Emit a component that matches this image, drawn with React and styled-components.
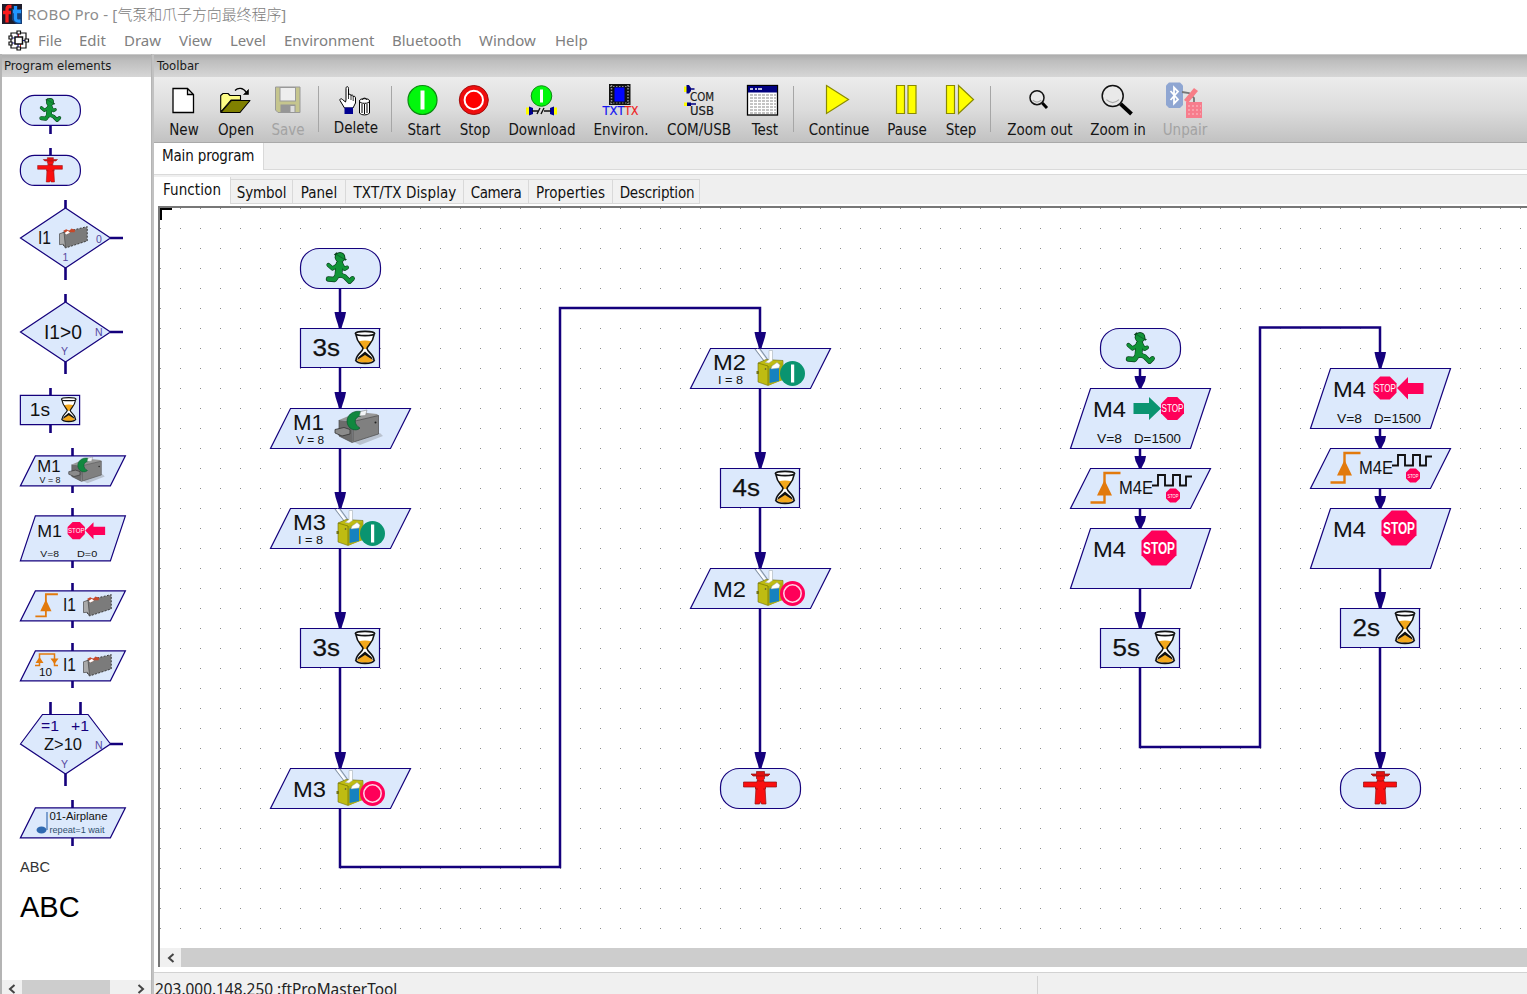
import React from "react";
import styled, { createGlobalStyle } from "styled-components";

const NAVY = "#14007c";
const FILL = "#dce9fc";
const PINK = "#ff0059";
const TEAL = "#0a9470";

const GlobalStyle = createGlobalStyle`
  *, *::before, *::after { box-sizing: border-box; }
  html, body { margin: 0; padding: 0; background: #fff; overflow: hidden; }
`;

/* ---------- window chrome ---------- */

const Window = styled.div`
  width: 1527px;
  height: 994px;
  overflow: hidden;
  display: flex;
  flex-direction: column;
  background: #fff;
  color: #111;
  font-family: "DejaVu Sans Condensed", "DejaVu Sans", sans-serif;
`;

const TitleBar = styled.header`
  height: 28px;
  flex: none;
  display: flex;
  align-items: center;
  gap: 5px;
  padding-left: 2px;
  font: 15px/28px "Noto Sans", "Noto Sans CJK SC", sans-serif;
  color: #8c8c8c;
  white-space: pre;
`;

const TitleText = styled.span`
  letter-spacing: 0.2px;
`;

const CjkText = styled.span`
  font-weight: 300;
  letter-spacing: -0.1px;
  color: #7c7c7c;
`;

const MenuBar = styled.nav`
  height: 26px;
  flex: none;
  display: flex;
  align-items: flex-start;
  padding-left: 8px;
  font: 15px/24px "Noto Sans", sans-serif;
  color: #808080;
`;

const MenuItem = styled.span`
  width: ${(p) => p.$w}px;
  white-space: nowrap;
`;

const MenuIcon = styled.span`
  width: 30px;
  height: 23px;
  padding-top: 2px;
  svg { display: block; }
`;

const Body = styled.div`
  flex: 1;
  min-height: 0;
  display: flex;
`;

const PanelTitle = styled.div`
  height: 23px;
  flex: none;
  padding-left: ${(p) => p.$pad}px;
  font-size: 13px;
  line-height: 21px;
  color: #1a1a1a;
  border-top: 1px solid #c8c8c8;
  background: linear-gradient(#adadad, #bdbdbd 25%, #d6d6d6);
`;

const Sidebar = styled.aside`
  width: 152px;
  flex: none;
  display: flex;
  flex-direction: column;
  border-left: 2px solid #b4b4b4;
  border-right: 1px solid #b4b4b4;
`;

const Palette = styled.div`
  flex: 1;
  min-height: 0;
  overflow: hidden;
  display: flex;
  flex-direction: column;
  align-items: flex-start;
  gap: 15px;
  padding: 18px 0 0 18px;
`;

const PaletteItem = styled.svg`
  width: 110px;
  height: ${(p) => p.$h}px;
  flex: none;
  display: block;
  overflow: visible;
`;

const PaletteText = styled.div`
  font-family: "Liberation Sans", sans-serif;
  font-size: ${(p) => p.$size}px;
  line-height: ${(p) => p.$lh}px;
  color: ${(p) => p.$color};
`;

const ScrollBar = styled.div`
  height: ${(p) => p.$h}px;
  flex: none;
  display: flex;
  background: #f0f0f0;
`;

const ScrollArrow = styled.div`
  width: ${(p) => p.$w}px;
  padding-top: ${(p) => p.$drop || 0}px;
  display: flex;
  align-items: center;
  justify-content: center;
`;

const ScrollThumb = styled.div`
  width: ${(p) => p.$w || "auto"};
  flex: ${(p) => (p.$w ? "none" : 1)};
  background: #cdcdcd;
`;

const Grow = styled.div`
  flex: 1;
`;

const Main = styled.main`
  flex: 1;
  min-width: 0;
  display: flex;
  flex-direction: column;
  border-left: 2px solid #c2c2c2;
`;

/* ---------- toolbar ---------- */

const Toolbar = styled.div`
  height: 66px;
  flex: none;
  display: flex;
  padding: 7px 0 0 4px;
  background: linear-gradient(#ececec, #dcdcdc 50%, #c2c2c2);
  border-bottom: 1px solid #a9a9a9;
`;

const ToolButton = styled.div`
  width: ${(p) => p.$w}px;
  flex: none;
  display: flex;
  flex-direction: column;
  align-items: center;
  color: ${(p) => (p.$disabled ? "#a3a3a3" : "#151515")};
`;

const ToolIcon = styled.svg`
  width: 32px;
  height: 32px;
  overflow: visible;
  display: block;
`;

const ToolLabel = styled.span`
  margin-top: ${(p) => (p.$raised ? 3 : 5)}px;
  font-size: 15px;
  line-height: 18px;
  white-space: nowrap;
`;

const Separator = styled.div`
  width: 1px;
  height: 46px;
  margin: 2px ${(p) => p.$after}px 0 ${(p) => p.$before}px;
  background: #a6a6a6;
  flex: none;
`;

/* ---------- tabs ---------- */

const ProgramTabs = styled.div`
  height: 27px;
  flex: none;
  display: flex;
  background: #efefef;
  border-bottom: 1px solid #dadada;
`;

const ProgramTab = styled.div`
  width: 110px;
  height: 27px;
  padding-left: 8px;
  font-size: 15px;
  line-height: 27px;
  letter-spacing: -0.15px;
  background: #fff;
  border-right: 1px solid #d9d9d9;
`;

const ViewTabs = styled.div`
  height: 30px;
  flex: none;
  display: flex;
  align-items: flex-end;
  margin-top: 4px;
  background: #efefef;
  border-top: 1px solid #dadada;
`;

const ViewTab = styled.div`
  width: ${(p) => p.$w}px;
  height: ${(p) => (p.$active ? 27 : 25)}px;
  display: flex;
  justify-content: center;
  font-size: 15px;
  line-height: ${(p) => (p.$active ? 27 : 26)}px;
  letter-spacing: ${(p) => p.$ls || 0}px;
  padding-left: ${(p) => p.$pad || 0}px;
  white-space: nowrap;
  background: ${(p) => (p.$active ? "#fff" : "#f1f1f1")};
  border: solid #d9d9d9;
  border-width: ${(p) => (p.$active ? "0 1px 0 0" : "1px 1px 1px 0")};
`;

/* ---------- canvas ---------- */

const CanvasFrame = styled.div`
  height: 761px;
  flex: none;
  display: flex;
  flex-direction: column;
  margin: 2px 0 0 4px;
  border-top: 2px solid #777;
  border-left: 2px solid #777;
`;

const Canvas = styled.div`
  position: relative;
  flex: 1;
  overflow: hidden;
  background-color: #fff;
  background-image: radial-gradient(circle at 0.5px 0.5px, #8c8c8c 0.8px, transparent 0.9px);
  background-size: 20px 20px;
`;

const Corner = styled.div`
  position: absolute;
  left: 0;
  top: 0;
  width: 12px;
  height: 12px;
  border-top: 2px solid #000;
  border-left: 2px solid #000;
`;

const Wires = styled.svg`
  position: absolute;
  left: 0;
  top: 0;
  width: 1370px;
  height: 740px;
`;

const CanvasNode = styled.svg`
  position: absolute;
  left: ${(p) => p.$x}px;
  top: ${(p) => p.$y}px;
  width: 142px;
  height: 62px;
  overflow: visible;
`;

const StatusBar = styled.footer`
  flex: 1;
  display: flex;
  margin-top: 5px;
  border-top: 1px solid #d2d2d2;
  background: #f0f0f0;
  font: 15.4px/27px "Noto Sans", sans-serif;
  color: #222;
`;

const StatusCell = styled.div`
  width: ${(p) => p.$w}px;
  margin-top: 3px;
  padding-left: 1px;
  border-right: 1px solid #d2d2d2;
`;

/* ---------- drawing primitives for program elements ---------- */

const line = { stroke: NAVY, strokeWidth: 1.2, vectorEffect: "non-scaling-stroke", fill: FILL };

const T = ({ x, y, s, w, c = "#111", children, ...rest }) => (
  <text
    x={x}
    y={y}
    fontSize={s}
    fill={c}
    fontFamily='"Liberation Sans", sans-serif'
    {...(w ? { textLength: w, lengthAdjust: "spacingAndGlyphs" } : {})}
    {...rest}
  >
    {children}
  </text>
);

const Stub = ({ d }) => <path d={d} stroke={NAVY} strokeWidth="2.600" fill="none" vectorEffect="non-scaling-stroke" />;

const Oval = () => <rect x=".5" y=".5" width="80" height="40" rx="19" ry="18.500" {...line} />;
const Box = () => <rect x=".5" y=".5" width="79" height="39" {...line} />;
const Slant = ({ h = 40 }) => <path d={`M20.500 .5H140.500L120.500 ${h + 0.5}H.5Z`} {...line} />;

const LIMBS = [
  ["M39.500 16.500 38.500 26", 6.6],
  ["M38 17 32.500 20.500 28.500 17", 3],
  ["M41.500 16.500 44.500 21 47 19.500", 2.8],
  ["M38 26.500 34.500 31.500 28.500 31", 4.2],
  ["M39 26.500 44.500 28.500 49.500 33.500 52.500 30.500", 3.6],
];

const Walker = () => (
  <g fill="none" strokeLinejoin="round" strokeLinecap="round">
    {LIMBS.map(([d, w]) => <path key={d} d={d} stroke="#0b3f1d" strokeWidth={w + 1.2} />)}
    <circle cx="40" cy="9.300" r="5.300" fill="#0b3f1d" />
    <path d="M33.800 6.800 36.500 4.300 47 11.500 45 12.500Z" fill="#0b3f1d" />
    {LIMBS.map(([d, w]) => <path key={d} d={d} stroke="#119438" strokeWidth={w} />)}
    <circle cx="40" cy="9.500" r="4.500" fill="#119438" />
    <path d="M36.500 6.500 45.500 12" stroke="#0b5a28" strokeWidth=".8" />
  </g>
);

const Stander = () => (
  <g fill="#fa0f0f" stroke="#8f1010" strokeWidth=".7">
    <path d="M36 18.500H45L45.500 28 46 36H41.500L40.500 33.500 39.500 36H35L35.500 28Z" />
    <path d="M23.500 14H37V12.500H44V14H56.500V19H45.500V21H35.500V19H23.500Z" />
    <path d="M38 18.500H43V22H38Z" stroke="none" />
    <path d="M36.500 7H44.500V10.500L42.500 13H38.500L36.500 10.500Z" />
    <path d="M36.500 3.500H44.500V6H50L48 8H33L31 6H36.500Z" fill="#e01212" />
  </g>
);

const Hourglass = () => (
  <g transform="translate(-.5 0)">
    <path d="M57.500 8C58 15 63 18 63.500 20 63 24 57 28 57 33 60 36 71 36 74 33 74 28 68 24 67.500 20 68 18 73 15 73.500 8Z" fill="#fff" />
    <path d="M59 13.500Q65.500 11.500 72 13.500 70 18 67 21H64Q61 18 59 13.500Z" fill="#f4a81c" />
    <path d="M57.500 33Q59 30 65.500 25 72 30 73.500 33 66 37 57.500 33Z" fill="#f4a81c" />
    <path d="M65.500 23.500 59 29 57.500 32 65.500 27 73.500 32 72 29Z" fill="#111" />
    <ellipse cx="65.500" cy="5.500" rx="9.700" ry="2.100" fill="#fff" stroke="#111" strokeWidth="1.600" />
    <path d="M56.500 7C57.500 15 63 17.500 63.500 20.500 63 24 57 26 56.500 32M74.500 7C73.500 15 68 17.500 67.500 20.500 68 24 74 26 74.500 32" fill="none" stroke="#111" strokeWidth="1.600" />
    <path d="M56 32C58 36.500 73 36.500 75 32" fill="none" stroke="#111" strokeWidth="1.800" />
  </g>
);

const Motor = () => (
  <g>
    <path d="M82 33 110 25 113 28 90 37Z" fill="#b9c2cf" />
    <path d="M83 13 108.500 7V26L82 34.500Z" fill="#808080" />
    <path d="M69 12 88 4 107 6 108.500 7.500 83 13.500Z" fill="#989898" />
    <path d="M69 12 83 13.500 82 34.500 69 28Z" fill="#6c6c6c" />
    <path d="M69 12V28L82 34.500 108.500 26V7.500L83 13.500V33" stroke="#4a4a4a" fill="none" strokeWidth=".7" />
    <path d="M65 21.500 74 19.500 80 21.500V26L72 28 65 25Z" fill="#8b8b8b" stroke="#333" strokeWidth=".8" />
    <circle cx="105.500" cy="14.500" r="1" fill="#222" />
    <path d="M91 3.500C79 1.500 73 13 80 20 83 22.500 88 22.500 90 20 84 17 83 9 91 8Z" fill="#11883f" stroke="#0a4f2c" strokeWidth=".6" />
    <path d="M90.500 3.500 97 2 95.500 7.500 89.500 8Z" fill="#f3f5f7" stroke="#777" strokeWidth=".5" />
  </g>
);

const Valve = () => (
  <g>
    <path d="M65 1 75 14M70 1 78 12" stroke="#8795a5" strokeWidth="1.200" />
    <path d="M67 1 76 13" stroke="#fff" strokeWidth="2" />
    <path d="M68 15 76 11.500 93 12.500V31L78 37.500 68 34Z" fill="#bfbc12" stroke="#6b6b10" strokeWidth=".6" />
    <path d="M78 18 93 14V32L78 37.500Z" fill="#aead10" />
    <path d="M68 15 78 18V37" stroke="#747405" strokeWidth=".7" fill="none" />
    <path d="M79.500 20.500 89 19V33L79.500 35Z" fill="#1682c0" />
    <path d="M79 15 82.500 12.500V2.500H79V11.500L75 14.500ZM82 18 87 14.500 90 17 89 20 81 21Z" fill="#fff" stroke="#9aa5a8" strokeWidth=".5" />
    <rect x="66.500" y="23" width="2.500" height="3" fill="#747415" />
    <circle cx="75.500" cy="21" r=".8" fill="#444" />
  </g>
);

const OnBadge = () => (
  <g>
    <circle cx="102.500" cy="25.500" r="12.500" fill={TEAL} />
    <rect x="101" y="16.500" width="3.200" height="18" fill="#fff" />
  </g>
);

const OffBadge = () => (
  <g>
    <circle cx="102.500" cy="25.500" r="12.500" fill={PINK} />
    <circle cx="102.500" cy="25.500" r="8.700" fill={PINK} stroke="#ffd6e4" strokeWidth="1.500" />
  </g>
);

const Octagon = ({ x, y, r, s, w }) => {
  const k = r * 0.42;
  return (
    <g>
      <path
        d={`M${x - k} ${y - r}H${x + k}L${x + r} ${y - k}V${y + k}L${x + k} ${y + r}H${x - k}L${x - r} ${y + k}V${y - k}Z`}
        fill={PINK}
      />
      <T x={x - w / 2} y={y + s * 0.36} s={s} w={w} c="#fff" fontWeight={r > 14 ? 700 : 400}>
        STOP
      </T>
    </g>
  );
};

const Edge = () => (
  <g>
    <path d="M20.500 34.500H34.500V5H50.500" fill="none" stroke="#e27a0c" strokeWidth="2.400" />
    <path d="M34.500 12 42 27.500H27Z" fill="#e27a0c" />
  </g>
);

const Switch = () => (
  <g>
    <path d="M67 15 99 7.500V26.500L70 36 67 32Z" fill="#7b7b7b" stroke="#3a3a3a" strokeWidth="1.300" strokeDasharray="2.500 2" />
    <path d="M62 17 68 15 70 35.500 67 31 62 31.500Z" fill="#a9a9a9" stroke="#444" strokeWidth=".9" />
    <path d="M67 13 71 11 75 13 78 10 83 12 82 15 76 15 72 18Z" fill="#c7482a" />
    <path d="M69 16 73 13 76 15.500 71 18Z" fill="#fff" />
  </g>
);

const Pulses = () => (
  <g>
    <path d="M82 17.500H88V7H95V17.500H103V7H110V17.500H116V8.500H122" fill="none" stroke="#111" strokeWidth="1.900" />
    <Octagon x={103} y={27.500} r={7} s={6} w={11} />
  </g>
);

/* ---------- element bodies ---------- */

const StartNode = () => (<><Oval /><Walker /></>);
const EndNode = () => (<><Oval /><Stander /></>);
const WaitNode = ({ label }) => (
  <>
    <Box />
    <T x={12.500} y={28} s={24.500} w={27.500} stroke="#111" strokeWidth=".25">{label}</T>
    <Hourglass />
  </>
);
const MotorNode = ({ label }) => (
  <>
    <Slant />
    <T x={23} y={21.500} s={22.500} w={31}>{label}</T>
    <T x={26} y={36} s={11.500} w={28}>V = 8</T>
    <Motor />
  </>
);
const MagnetNode = ({ label, on }) => (
  <>
    <Slant />
    <T x={23} y={on ? 21.500 : 28.500} s={22.500} w={33}>{label}</T>
    {on && <T x={28} y={36} s={11.500} w={25}>I = 8</T>}
    <Valve />
    {on ? <OnBadge /> : <OffBadge />}
  </>
);
const DriveNode = ({ left, label = "M4", d = "D=1500" }) => (
  <>
    <Slant h={60} />
    <T x={23} y={28.500} s={22.500} w={33}>{label}</T>
    {left ? (
      <>
        <Octagon x={75} y={20} r={11.500} s={10.500} w={22} />
        <path d="M87 20 98 9V15H113.500V26H98V31.500Z" fill={PINK} />
      </>
    ) : (
      <>
        <path d="M63.500 15H79V9L91 20.500 79 32V26H63.500Z" fill={TEAL} />
        <Octagon x={102.500} y={20.500} r={11.500} s={10.500} w={22} />
      </>
    )}
    <T x={27} y={55} s={13} w={25}>V=8</T>
    <T x={d.length > 4 ? 64 : 76} y={55} s={13} w={d.length > 4 ? 47 : 27}>{d}</T>
  </>
);
const EncoderNode = () => (
  <>
    <Slant />
    <Edge />
    <T x={49} y={25.500} s={18} w={34}>M4E</T>
    <Pulses />
  </>
);
const HaltNode = () => (
  <>
    <Slant h={60} />
    <T x={23} y={28.500} s={22.500} w={33}>M4</T>
    <Octagon x={89} y={20} r={17.500} s={16} w={32} />
  </>
);

/* ---------- program data ---------- */

const NODES = [
  { x: 300, y: 248, el: <StartNode /> },
  { x: 300, y: 328, el: <WaitNode label="3s" /> },
  { x: 270, y: 408, el: <MotorNode label="M1" /> },
  { x: 270, y: 508, el: <MagnetNode label="M3" on /> },
  { x: 300, y: 628, el: <WaitNode label="3s" /> },
  { x: 270, y: 768, el: <MagnetNode label="M3" /> },
  { x: 690, y: 348, el: <MagnetNode label="M2" on /> },
  { x: 720, y: 468, el: <WaitNode label="4s" /> },
  { x: 690, y: 568, el: <MagnetNode label="M2" /> },
  { x: 720, y: 768, el: <EndNode /> },
  { x: 1100, y: 328, el: <StartNode /> },
  { x: 1070, y: 388, el: <DriveNode /> },
  { x: 1070, y: 468, el: <EncoderNode /> },
  { x: 1070, y: 528, el: <HaltNode /> },
  { x: 1100, y: 628, el: <WaitNode label="5s" /> },
  { x: 1310, y: 368, el: <DriveNode left /> },
  { x: 1310, y: 448, el: <EncoderNode /> },
  { x: 1310, y: 508, el: <HaltNode /> },
  { x: 1340, y: 608, el: <WaitNode label="2s" /> },
  { x: 1340, y: 768, el: <EndNode /> },
];

const WIRES = [
  [[340, 289], [340, 328]],
  [[340, 368], [340, 408]],
  [[340, 449], [340, 508]],
  [[340, 549], [340, 628]],
  [[340, 668], [340, 768]],
  [[340, 809], [340, 867], [560, 867], [560, 308], [760, 308], [760, 348]],
  [[760, 389], [760, 468]],
  [[760, 508], [760, 568]],
  [[760, 609], [760, 768]],
  [[1140, 369], [1140, 388]],
  [[1140, 449], [1140, 468]],
  [[1140, 509], [1140, 528]],
  [[1140, 589], [1140, 628]],
  [[1140, 668], [1140, 747], [1260, 747], [1260, 327.5], [1380, 327.5], [1380, 368]],
  [[1380, 429], [1380, 448]],
  [[1380, 489], [1380, 508]],
  [[1380, 569], [1380, 608]],
  [[1380, 648], [1380, 768]],
];

const Wire = ({ points }) => {
  const [x, y] = points[points.length - 1];
  const len = y - points[points.length - 2][1] < 25 ? 12 : 16;
  return (
    <g>
      <polyline points={points.map((p) => p.join(",")).join(" ")} fill="none" stroke={NAVY} strokeWidth="2.500" />
      <path d={`M${x - 5.5} ${y - len}H${x + 6}L${x + 5} ${y - len + 5}L${x + 1.5} ${y}H${x - 1}L${x - 4.5} ${y - len + 5}Z`} fill={NAVY} />
    </g>
  );
};

/* ---------- toolbar icons ---------- */

const Lens = ({ x, y, r, hx, hy, w }) => (
  <g>
    <path d={`M${x + r * 0.75} ${y + r * 0.75}L${hx} ${hy}`} stroke="#000" strokeWidth={w} />
    <circle cx={x} cy={y} r={r} fill="#e9e9e9" stroke="#111" strokeWidth="1.500" />
    <path d={`M${x - r * 0.6} ${y + r * 0.35}Q${x} ${y + r * 0.9} ${x + r * 0.6} ${y + r * 0.35}`} fill="none" stroke="#aaa" strokeWidth="1.200" />
  </g>
);

const PixelText = ({ x, y, w, c, children }) => (
  <text x={x} y={y} fontSize="12" fill={c} textLength={w} lengthAdjust="spacingAndGlyphs" fontFamily='"DejaVu Sans", sans-serif' stroke={c} strokeWidth=".2">
    {children}
  </text>
);

const yellow = { fill: "#ff0", stroke: "#8a8a00", strokeWidth: 1.2 };

const ICONS = {
  new: <path d="M5 4.500H19.500L25.500 10.500V28.500H5ZM19.500 4.500V10.500H25.500" fill="#fff" stroke="#000" strokeWidth="1.300" />,
  open: (
    <g stroke="#000" strokeLinejoin="round">
      <path d="M.7 28V11.500L3 9.500H8L10 11.500H20.500V16H11Z" fill="#fdfc86" strokeWidth="1.100" />
      <path d="M1 28.500 11.500 16.500H30L20 28.500Z" fill="#808000" strokeWidth="1.100" />
      <path d="M15 6.500C18 3.500 23 3.500 26 8" fill="none" strokeWidth="1.300" />
      <path d="M28.500 5.500V10.500H23.500Z" fill="#000" strokeWidth=".6" />
    </g>
  ),
  save: (
    <g>
      <path d="M3.500 3H28V28.500H6L3.500 26Z" fill="#c5c58e" stroke="#999" />
      <rect x="8" y="3.500" width="15.500" height="13.500" fill="#eee" stroke="#999" />
      <rect x="8.500" y="20.500" width="15" height="8" fill="#969696" />
      <rect x="18.500" y="22" width="4" height="6" fill="#ddd" />
    </g>
  ),
  delete: (
    <g>
      <path d="M6.500 16V4.500C6.500 2 9 2 9 4.500V11C10 9.500 11 10 11.500 11.500 12.500 10.500 13.500 11 13.700 12.500 15 11.500 16 13 16 14V19L13.500 24H5L.5 16.500C0 15 1.500 14 3 15.500L6 18Z" fill="#fff" stroke="#000" transform="translate(-.5 0)" />
      <path d="M9 5V15M11.500 11V16M13.700 12V17" stroke="#000" fill="none" strokeWidth=".8" transform="translate(-.5 0)" />
      <rect x="4.500" y="23.500" width="8.500" height="6.500" fill="#000090" />
      <path d="M19.500 17V29C21 31.500 28 31.500 29.500 29V17" fill="#fff" stroke="#000" />
      <ellipse cx="24.500" cy="17" rx="5" ry="2.300" fill="#fff" stroke="#000" />
      <path d="M22.500 16C22.500 13.500 26.500 13.500 26.500 16M22 20V29M24.500 20V30M27 20V29" fill="none" stroke="#000" />
    </g>
  ),
  start: (
    <g>
      <circle cx="14.500" cy="16" r="14.500" fill="#02f70c" stroke="#0b8a10" strokeWidth="1.200" />
      <rect x="12.500" y="6.500" width="4" height="19" fill="#fff" />
    </g>
  ),
  stop: (
    <g>
      <circle cx="14.800" cy="16" r="14.500" fill="#ee0d0d" stroke="#a30b0b" />
      <circle cx="14.800" cy="16" r="9.200" fill="#fe0000" stroke="#fff" strokeWidth="2" />
    </g>
  ),
  download: (
    <g>
      <circle cx="15.500" cy="12" r="10.300" fill="#02f70c" stroke="#0b8a10" />
      <rect x="14" y="5.500" width="3" height="13" fill="#fff" />
      <path d="M0 23.500H3V30.500H0ZM28 23.500H31V30.500H28Z" fill="#ff0" />
      <path d="M3 22.500 7 24V30L3 31.500ZM28 22.500 24 24V30L28 31.500Z" fill="#000090" />
      <path d="M6 27H12M18 27H25M11 30 14 24M15 30 18 24" stroke="#111" strokeWidth="1.400" />
    </g>
  ),
  environ: (
    <g>
      <rect x="4" y="0" width="21.500" height="21" fill="#111" />
      <path d="M6.500 1V20M23 1V20" stroke="#999" strokeWidth="1.500" strokeDasharray="1.500 1.500" />
      <path d="M5 2.500H25M5 19H25" stroke="#888" strokeDasharray="1.500 1.500" />
      <rect x="9.500" y="3.500" width="10" height="14" fill="#0206ff" />
      <PixelText x={-2.5} y={31} w={22} c="#1414f0">TXT</PixelText>
      <PixelText x={19.5} y={31} w={14} c="#ee1c1c">TX</PixelText>
    </g>
  ),
  com: (
    <g>
      <path d="M1 2.500H4V8H1ZM1 18.500H4V22H1Z" fill="#ff0" />
      <path d="M3.500 1H6L8 4V7L6 9.500H3.500ZM4 18.500H8V22H4Z" fill="#000080" />
      <path d="M7 5H11.500M8 20H13" stroke="#000080" strokeWidth="1.500" />
      <PixelText x={7} y={16.5} w={24} c="#1a1a1a">COM</PixelText>
      <PixelText x={7} y={31.3} w={24} c="#1a1a1a">USB</PixelText>
    </g>
  ),
  test: (
    <g>
      <rect x="-1.500" y="1.500" width="30" height="29.500" fill="#fff" stroke="#000" strokeWidth="1.300" />
      <rect x="-1" y="2" width="29" height="6.500" fill="#000080" />
      <path d="M1 5H4M6 5H8M9 5H13" stroke="#fff" strokeWidth="1.300" />
      <path d="M1 11H27M1 14H27M1 17H27M1 20H27M1 23H27M1 26H27M1 29H27" stroke="#8a8a8a" strokeWidth="1.200" strokeDasharray="3 1" />
    </g>
  ),
  continue: <path d="M3.500 1.500 25.500 15.500 3.500 29.500Z" {...yellow} />,
  pause: <path d="M5.500 1.500H13.500V29.500H5.500ZM17 1.500H25V29.500H17Z" {...yellow} />,
  step: <path d="M1.500 1.500H9.500V29.500H1.500ZM13.500 1.500 28.500 15.500 13.500 29.500Z" {...yellow} />,
  zoomOut: <Lens x={13} y={13.7} r={7} hx={23} hy={24} w={3} />,
  zoomIn: <Lens x={10.7} y={12} r={10.5} hx={29.5} hy={30} w={4} />,
  unpair: (
    <g>
      <path d="M0-1.500H11L14 1.500V21L11 24H0L-3 21V1.500Z" fill="#8fa6d2" />
      <path d="M1.500 7 9 15.500 5 19.500V3.500L9 7.500 1.500 16" fill="none" stroke="#fff" strokeWidth="1.800" />
      <path d="M13 8 20 9 25 14V19" fill="none" stroke="#777" strokeWidth="1.800" />
      <path d="M15 16 25 4 29 7 19 19Z" fill="#f77d86" />
      <rect x="17" y="18" width="16" height="16" fill="#f77d8d" />
      <path d="M19 22H32M19 26H32M19 30H32" stroke="#fbc3ca" strokeWidth="1.200" strokeDasharray="2 2" />
    </g>
  ),
};

const TOOLS = [
  { icon: "new", label: "New", w: 52 },
  { icon: "open", label: "Open", w: 52 },
  { icon: "save", label: "Save", w: 52, disabled: true },
  { sep: [4, 11] },
  { icon: "delete", label: "Delete", w: 52, raised: true },
  { sep: [9, 6] },
  { icon: "start", label: "Start", w: 52 },
  { icon: "stop", label: "Stop", w: 50 },
  { icon: "download", label: "Download", w: 84 },
  { icon: "environ", label: "Environ.", w: 74 },
  { icon: "com", label: "COM/USB", w: 82 },
  { icon: "test", label: "Test", w: 50 },
  { sep: [3, 8] },
  { icon: "continue", label: "Continue", w: 74 },
  { icon: "pause", label: "Pause", w: 62 },
  { icon: "step", label: "Step", w: 46 },
  { sep: [6, 8] },
  { icon: "zoomOut", label: "Zoom out", w: 82 },
  { icon: "zoomIn", label: "Zoom in", w: 74 },
  { icon: "unpair", label: "Unpair", w: 60, disabled: true },
];

const MENU = [
  ["File", 41], ["Edit", 45], ["Draw", 55], ["View", 51], ["Level", 54],
  ["Environment", 108], ["Bluetooth", 87], ["Window", 76], ["Help", 40],
];

const VIEWS = [
  ["Function", 77, 0.1, 0], ["Symbol", 62, -0.1, 0], ["Panel", 53, 0, 0], ["TXT/TX Display", 118, 0.1, 1],
  ["Camera", 65, -0.4, 0], ["Properties", 84, 0.1, 0], ["Description", 87, -0.2, 2],
];

const Chevron = ({ right }) => (
  <svg width="8" height="10" viewBox="0 0 8 10">
    <path d={right ? "M1.500 1 6 5 1.500 9" : "M6.500 1 2 5 6.500 9"} fill="none" stroke="#444" strokeWidth="2" />
  </svg>
);

const Logo = () => (
  <svg width="20" height="20" viewBox="0 0 20 20">
    <rect width="20" height="20" fill="#201d2b" />
    <path d="M10 5H20V20H14L10 16Z" fill="#173f78" />
    <path d="M9.500 2.500H7.500Q5 2.500 5 5.500V18.500M1 8.500H9" fill="none" stroke="#fb1c1c" strokeWidth="3.300" />
    <path d="M13.500 2V14.500Q13.500 17.500 18.500 17M11 7.500H19" fill="none" stroke="#2196ff" strokeWidth="3.300" />
  </svg>
);

const AppGlyph = () => (
  <svg width="22" height="21" viewBox="0 0 22 21">
    <path d="M3 3H18V18H3Z" fill="none" stroke="#111" strokeWidth="1.200" />
    <path d="M10 3V18M3 8H7M3 13H7M14 10.500H18" stroke="#22a" strokeWidth="1.200" />
    <path d="M10.500 4V7M12.500 14V17" stroke="#c22" />
    <rect x="7" y="7" width="7.500" height="7" fill="#fff" stroke="#111" strokeWidth="1.500" />
    <g fill="#fff" stroke="#111" strokeWidth="1.200">
      <path d="M9 1H12.500V4H9ZM9 17H12.500V20H9ZM1 6H4V9H1ZM1 12H4V15H1ZM17 9H20.500V12H17Z" />
    </g>
  </svg>
);

/* Palette entries reuse the canvas drawings at three quarters of their size. */
const Small = ({ y = 7, children }) => <g transform={`translate(0 ${y}) scale(.75)`}>{children}</g>;

const PALETTE = [
  [38, <><Stub d="M30.500 31V39" /><Small y={0}><StartNode /></Small></>],
  [37, <><Stub d="M30.500 0V7" /><Small><EndNode /></Small></>],
  [79, (
    <>
      <Stub d="M45.500 0V8M45.500 68V80M90 38H103" />
      <path d="M.5 38 45.500 8 90.500 38 45.500 68Z" {...line} />
      <T x={18} y={43.5} s={18} w={13}>I1</T>
      <g transform="translate(-7 21) scale(.75)"><Switch /></g>
      <T x={76} y={43} s={10.5} c="#5548a0">0</T>
      <T x={42.5} y={61} s={10.5} c="#5548a0">1</T>
    </>
  )],
  [79, (
    <>
      <Stub d="M45.500 0V8M45.500 68V80M90 38H103" />
      <path d="M.5 38 45.500 8 90.500 38 45.500 68Z" {...line} />
      <T x={24} y={44.5} s={19.5} w={38}>I1&gt;0</T>
      <T x={75} y={42} s={10.5} c="#5548a0">N</T>
      <T x={41} y={61} s={10.5} c="#5548a0">Y</T>
    </>
  )],
  [45, <><Stub d="M30.500 0V7M30.500 37V45" /><Small><Box /><T x={13} y={28.5} s={24} w={27}>1s</T><Hourglass /></Small></>],
  [45, <><Stub d="M52.500 0V8M52.500 38V45" /><Small y={7.5}><MotorNode label="M1" /></Small></>],
  [60, <><Stub d="M52.500 0V8M52.500 53V60" /><Small y={7.5}><DriveNode left label="M1" d="D=0" /></Small></>],
  [45, (
    <>
      <Stub d="M52.500 0V8M52.500 38V45" />
      <Small y={7.5}><Slant /><Edge /></Small>
      <T x={43} y={28} s={17.5} w={13}>I1</T>
      <g transform="translate(17 6) scale(.75)"><Switch /></g>
    </>
  )],
  [44, (
    <>
      <Stub d="M52.500 0V8M52.500 38V45" />
      <Small y={7.5}><Slant /></Small>
      <path d="M15 22.500H19.500V11H34.500V22.500H38" fill="none" stroke="#e27a0c" strokeWidth="1.500" />
      <path d="M19.500 14 23.500 20H15.500ZM34.500 21 30.500 15.500H38.500Z" fill="#e27a0c" />
      <T x={19} y={33} s={11.5} w={13}>10</T>
      <T x={43} y={28} s={17.5} w={13}>I1</T>
      <g transform="translate(17 6) scale(.75)"><Switch /></g>
    </>
  )],
  [83, (
    <>
      <Stub d="M30.500 0V12M60.500 0V12M45.500 72V84M90 42H103" />
      <path d="M22.500 12.500H68L90.500 42 45.500 72 .5 42Z" {...line} />
      <T x={21} y={29} s={15} w={18} c={NAVY}>=1</T>
      <T x={51} y={29} s={15} w={18} c={NAVY}>+1</T>
      <T x={24} y={48} s={17} w={38}>Z&gt;10</T>
      <T x={75} y={46.5} s={10.5} c="#5548a0">N</T>
      <T x={41} y={65.5} s={10.5} c="#5548a0">Y</T>
    </>
  )],
  [45, (
    <>
      <Stub d="M52.500 0V8M52.500 38V46" />
      <Small y={7.5}><Slant /></Small>
      <path d="M27 12V30" stroke="#3b6fb3" strokeWidth="1.200" />
      <ellipse cx="21.500" cy="30" rx="5" ry="3.500" fill="#2f69b0" />
      <T x={29.5} y={20} s={11.5} w={58}>01-Airplane</T>
      <T x={29.5} y={32.5} s={9} w={55} c="#31506f">repeat=1 wait</T>
    </>
  )],
];

export default function App() {
  return (
    <Window>
      <GlobalStyle />
      <TitleBar>
        <Logo />
        <TitleText>ROBO Pro - [<CjkText>气泵和爪子方向最终程序</CjkText>]</TitleText>
      </TitleBar>
      <MenuBar>
        <MenuIcon><AppGlyph /></MenuIcon>
        {MENU.map(([label, w]) => <MenuItem key={label} $w={w}>{label}</MenuItem>)}
      </MenuBar>
      <Body>
        <Sidebar>
          <PanelTitle $pad={2}>Program elements</PanelTitle>
          <Palette>
            {PALETTE.map(([h, el], i) => <PaletteItem key={i} $h={h}>{el}</PaletteItem>)}
            <PaletteText $size={14.6} $lh={14} $color="#333">ABC</PaletteText>
            <PaletteText $size={29} $lh={36} $color="#000">ABC</PaletteText>
          </Palette>
          <ScrollBar $h={14}>
            <ScrollArrow $w={20} $drop={4}><Chevron /></ScrollArrow>
            <ScrollThumb $w="88px" />
            <Grow />
            <ScrollArrow $w={20} $drop={4}><Chevron right /></ScrollArrow>
          </ScrollBar>
        </Sidebar>
        <Main>
          <PanelTitle $pad={3}>Toolbar</PanelTitle>
          <Toolbar>
            {TOOLS.map((t, i) =>
              t.sep ? (
                <Separator key={i} $before={t.sep[0]} $after={t.sep[1]} />
              ) : (
                <ToolButton key={i} $w={t.w} $disabled={t.disabled}>
                  <ToolIcon viewBox="0 0 32 32">{ICONS[t.icon]}</ToolIcon>
                  <ToolLabel $raised={t.raised}>{t.label}</ToolLabel>
                </ToolButton>
              )
            )}
          </Toolbar>
          <ProgramTabs>
            <ProgramTab>Main program</ProgramTab>
          </ProgramTabs>
          <ViewTabs>
            {VIEWS.map(([label, w, ls, pad], i) => (
              <ViewTab key={label} $w={w} $ls={ls} $pad={pad} $active={i === 0}>{label}</ViewTab>
            ))}
          </ViewTabs>
          <CanvasFrame>
            <Canvas>
              <Corner />
              <Wires viewBox="160 208 1370 740">
                {WIRES.map((points, i) => <Wire key={i} points={points} />)}
              </Wires>
              {NODES.map((n, i) => (
                <CanvasNode key={i} $x={n.x - 160} $y={n.y - 208}>{n.el}</CanvasNode>
              ))}
            </Canvas>
            <ScrollBar $h={19}>
              <ScrollArrow $w={21}><Chevron /></ScrollArrow>
              <ScrollThumb />
            </ScrollBar>
          </CanvasFrame>
          <StatusBar>
            <StatusCell $w={884}>203.000.148.250 :ftProMasterTool</StatusCell>
          </StatusBar>
        </Main>
      </Body>
    </Window>
  );
}
